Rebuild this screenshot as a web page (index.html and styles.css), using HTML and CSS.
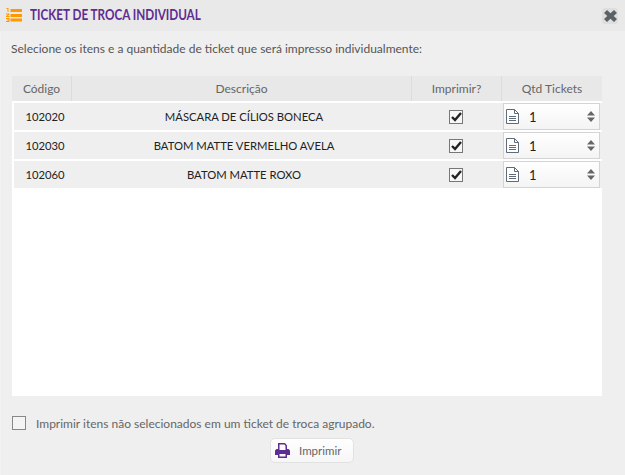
FILE: index.html
```html
<!DOCTYPE html>
<html lang="pt-BR">

<head>
    <meta charset="UTF-8">
    <title>Ticket de Troca Individual</title>
    <link rel="stylesheet" href="styles.css">
</head>

<body>
    <div class="titlebar">
        <svg class="title-icon" width="17" height="14" viewBox="0 0 17 14">
            <path d="M1.500 0h2v4h-1V1h-1zM1 5.500h3.500v1l-2 1.500h2v1H1V8l2-1.500H1zM1 10h3.500v4H1v-1h2.500v-.5H2v-1h1.500V11H1z" fill="#f90"/>
            <path d="M5.500 1h11.500v3H5.500zM5.500 6h11.500v3H5.500zM5.500 10.500h11.500v3H5.500z" fill="#f90"/>
        </svg>
        <span class="title">TICKET DE TROCA INDIVIDUAL</span>
        <button class="close-button">
            <svg width="13" height="12" viewBox="0 0 13 12">
                <path d="M3 0 6.500 3.200 10 0 13 3 9.700 6 13 9 10 12 6.500 8.800 3 12 0 9 3.300 6 0 3z" fill="#5a6268"/>
            </svg>
        </button>
    </div>

    <div class="content">
        <p class="intro">Selecione os itens e a quantidade de ticket que será impresso individualmente:</p>

        <div class="grid">
            <div class="row head">
                <div class="col-cod">Código</div>
                <div class="col-desc">Descrição</div>
                <div class="col-print">Imprimir?</div>
                <div class="col-qtd">Qtd Tickets</div>
            </div>

            <div class="row item">
                <div class="col-cod">102020</div>
                <div class="col-desc">MÁSCARA DE CÍLIOS BONECA</div>
                <div class="col-print"><span class="check checked">
                    <svg width="11" height="10" viewBox="0 0 11 10"><path d="M1 5l3 3 6-7" fill="none" stroke="#222" stroke-width="2.400"/></svg>
                </span></div>
                <div class="col-qtd">
                    <div class="spinner">
                        <svg class="doc" width="13" height="15" viewBox="0 0 13 15"><path d="M.5.500h8l4 4v10H.500zM8.500.500v4h4M3 7.500h7M3 9.500h7M3 11.500h7" fill="#fff" stroke="#5f6b78"/></svg>
                        <span class="num">1</span>
                        <svg class="arrows" width="8" height="11" viewBox="0 0 8 11"><path d="M4 0l4 4.500H0zM4 11L0 6.500h8z" fill="#666"/></svg>
                    </div>
                </div>
            </div>

            <div class="row item">
                <div class="col-cod">102030</div>
                <div class="col-desc">BATOM MATTE VERMELHO AVELA</div>
                <div class="col-print"><span class="check checked">
                    <svg width="11" height="10" viewBox="0 0 11 10"><path d="M1 5l3 3 6-7" fill="none" stroke="#222" stroke-width="2.400"/></svg>
                </span></div>
                <div class="col-qtd">
                    <div class="spinner">
                        <svg class="doc" width="13" height="15" viewBox="0 0 13 15"><path d="M.5.500h8l4 4v10H.500zM8.500.500v4h4M3 7.500h7M3 9.500h7M3 11.500h7" fill="#fff" stroke="#5f6b78"/></svg>
                        <span class="num">1</span>
                        <svg class="arrows" width="8" height="11" viewBox="0 0 8 11"><path d="M4 0l4 4.500H0zM4 11L0 6.500h8z" fill="#666"/></svg>
                    </div>
                </div>
            </div>

            <div class="row item">
                <div class="col-cod">102060</div>
                <div class="col-desc">BATOM MATTE ROXO</div>
                <div class="col-print"><span class="check checked">
                    <svg width="11" height="10" viewBox="0 0 11 10"><path d="M1 5l3 3 6-7" fill="none" stroke="#222" stroke-width="2.400"/></svg>
                </span></div>
                <div class="col-qtd">
                    <div class="spinner">
                        <svg class="doc" width="13" height="15" viewBox="0 0 13 15"><path d="M.5.500h8l4 4v10H.500zM8.500.500v4h4M3 7.500h7M3 9.500h7M3 11.500h7" fill="#fff" stroke="#5f6b78"/></svg>
                        <span class="num">1</span>
                        <svg class="arrows" width="8" height="11" viewBox="0 0 8 11"><path d="M4 0l4 4.500H0zM4 11L0 6.500h8z" fill="#666"/></svg>
                    </div>
                </div>
            </div>
        </div>

        <div class="agrupado">
            <span class="check"></span>
            <span>Imprimir itens não selecionados em um ticket de troca agrupado.</span>
        </div>

        <div class="actions">
            <button class="print-button">
                <svg width="15" height="15" viewBox="0 0 15 15"><path d="M3 0h7l2 2.500V6h1.500L15 7.500V12h-3v3H3v-3H0V7.500L1.500 6H3zM4.500 1.500V7h6V3L9.500 1.500zM4.500 11v2.500h6V11z" fill="#5f2d91" fill-rule="evenodd"/></svg>
                Imprimir
            </button>
        </div>
    </div>
</body>

</html>
```

FILE: styles.css
```css
* {
    box-sizing: border-box;
}

body {
    margin: 0;
    height: 475px;
    overflow: hidden;
    background-color: #efefef;
    font-family: 'Lato', sans-serif;
    font-size: 12px;
    color: #555;
    display: flex;
    flex-direction: column;
}

.titlebar {
    height: 31px;
    background-color: #e9e9e9;
    display: flex;
    align-items: center;
    padding: 0 7px 0 5px;
}

.title-icon {
    margin: 0 8px 2px 0;
}

.title {
    font-size: 15px;
    font-weight: bold;
    color: #5f2d91;
    flex: 1;
    margin-bottom: 3px;
    transform: scaleX(0.78);
    transform-origin: left center;
}

.close-button {
    width: 16px;
    height: 16px;
    border: none;
    border-radius: 3px;
    padding: 0;
    background-color: #dedede;
    display: flex;
    align-items: center;
    justify-content: center;
}

.content {
    flex: 1;
    padding: 0 23px 0 12px;
    display: flex;
    flex-direction: column;
    border-left: 1px solid #f2f2f2;
}

.intro {
    margin: 10px 0 0 -2px;
    height: 35px;
    line-height: 16px;
}

.grid {
    height: 320px;
    background-color: #fff;
    margin-left: -1px;
}

.row {
    display: grid;
    grid-template-columns: 60px 340px 90px 100px;
    align-items: center;
}

.head {
    height: 25px;
    background-color: #e8e8e8;
    color: #666;
    margin-bottom: 2px;
}

.head > div {
    height: 100%;
    line-height: 25px;
    text-align: center;
    border-right: 1px solid #dcdcdc;
}

.head > div:last-child {
    border-right: none;
}

.item {
    height: 27px;
    background-color: #efefef;
    margin: 0 0 2px 2px;
    grid-template-columns: 58px 340px 90px 100px;
    color: #222;
    font-size: 11.250px;
}

.item .col-cod,
.item .col-desc {
    padding-left: 4px;
}

.col-cod,
.col-desc,
.col-print {
    text-align: center;
}

.col-print {
    display: flex;
    justify-content: center;
}

.item .col-print {
    padding-right: 2px;
}

.head .col-print {
    display: block;
}

.check {
    width: 14px;
    height: 14px;
    border: 1px solid #777;
    background-color: #f7f7f7;
    display: inline-flex;
    align-items: center;
    justify-content: center;
}

.spinner {
    height: 27px;
    background: linear-gradient(#fff, #f4f4f4);
    border: 1px solid #d4d4d4;
    display: flex;
    align-items: center;
    padding: 0 4px 0 2px;
    margin: 0 2px 0 1px;
}

.num {
    flex: 1;
    margin-left: 10px;
    font-size: 13px;
    color: #222;
}

.agrupado {
    display: flex;
    align-items: center;
    gap: 10px;
    margin: 19px 0 0 -1px;
    height: 16px;
    color: #666;
}

.agrupado .check {
    border-color: #888;
    background-color: #f4f4f4;
}

.actions {
    display: flex;
    justify-content: center;
    margin-top: 7px;
    padding-left: 9px;
}

.print-button {
    width: 84px;
    height: 25px;
    background: linear-gradient(#fff, #f6f6f6);
    border: 1px solid #e2e2e2;
    border-radius: 5px;
    font-family: inherit;
    font-size: 11.500px;
    color: #666;
    display: flex;
    align-items: center;
    gap: 9px;
    padding: 0 0 0 4px;
}
```
